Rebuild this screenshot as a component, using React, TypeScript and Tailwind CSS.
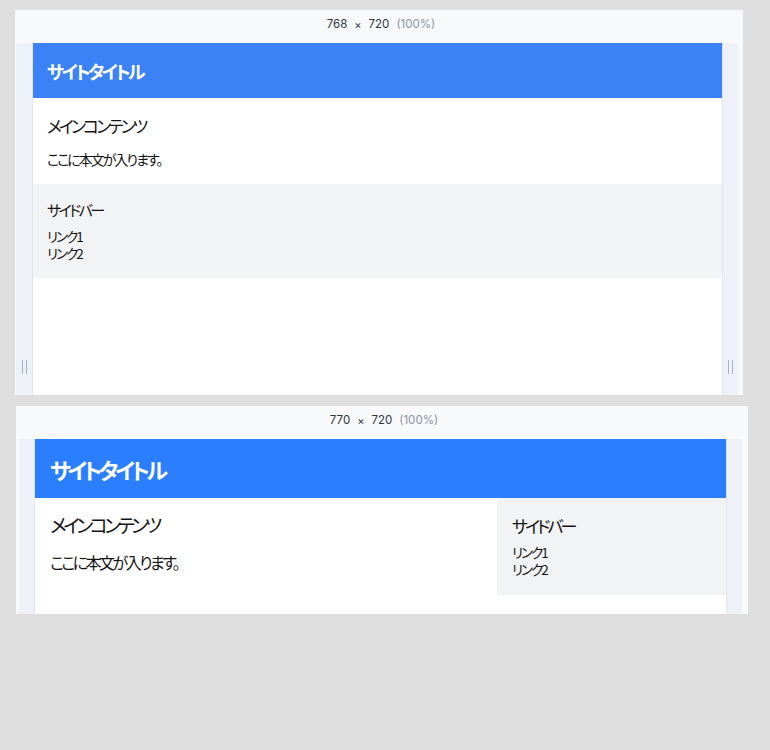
const jp = "font-['Noto_Sans_CJK_JP',sans-serif] [font-feature-settings:'palt']";

const SizeLabel = ({ w }: { w: number }) => (
  <div className="h-[33px] flex items-center justify-center text-[11.5px] font-['Inter',sans-serif] pb-[3px] pl-[4px]">
    <span className="text-[#2f3642]">{w}</span>
    <span className="ml-[7px] text-[#2f3642] text-[11px]">×</span>
    <span className="ml-[7px] text-[#2f3642]">720</span>
    <span className="ml-[7px] text-[#8a94a3]">(100%)</span>
  </div>
);

const Handle = () => (
  <div className="flex gap-[3px] h-[14px]">
    <div className="w-px h-full bg-[#a7b2c3]" />
    <div className="w-px h-full bg-[#a7b2c3]" />
  </div>
);

// narrow: sidebar stacks below main (768px)
const NarrowSite = () => (
  <div className={`flex-1 bg-white overflow-hidden text-[#141414] ${jp}`}>
    <header className="h-[55px] bg-[#3b82f6] px-[14px] flex items-center">
      <h1 className="text-[18px] leading-none tracking-[-2.5px] text-white font-semibold">サイトタイトル</h1>
    </header>
    <main className="h-[86px] px-[14px] pt-[16px]">
      <h2 className="text-[17px] leading-[23px] tracking-[-3px]">メインコンテンツ</h2>
      <p className="mt-[12px] text-[14px] leading-[20px] tracking-[-2px]">ここに本文が入ります。</p>
    </main>
    <aside className="h-[94px] bg-[#f2f3f5] px-[14px] pt-[16px]">
      <h3 className="text-[15px] leading-[20px] tracking-[-2.5px]">サイドバー</h3>
      <ul className="mt-[8px] text-[13.5px] leading-[17px] tracking-[-2px]">
        <li>リンク1</li>
        <li>リンク2</li>
      </ul>
    </aside>
  </div>
);

// wide: main + sidebar side by side (770px)
const WideSite = () => (
  <div className={`flex-1 bg-white overflow-hidden text-[#141414] ${jp}`}>
    <header className="h-[59px] bg-[#2b7fff] px-[15px] flex items-center">
      <h1 className="text-[22px] leading-none tracking-[-3.5px] text-white font-semibold">サイトタイトル</h1>
    </header>
    <div className="flex items-start">
      <main className="flex-1 px-[15px] pt-[16px]">
        <h2 className="text-[19px] leading-[22px] tracking-[-3.5px]">メインコンテンツ</h2>
        <p className="mt-[15px] text-[16px] leading-[22px] tracking-[-2.5px]">ここに本文が入ります。</p>
      </main>
      <aside className="w-[229px] h-[97px] bg-[#f2f3f5] px-[15px] pt-[16px]">
        <h3 className="text-[17px] leading-[24px] tracking-[-3px]">サイドバー</h3>
        <ul className="mt-[6px] text-[13.5px] leading-[17px] tracking-[-2px]">
          <li>リンク1</li>
          <li>リンク2</li>
        </ul>
      </aside>
    </div>
  </div>
);

export default function App() {
  return (
    <div className="min-h-[750px] bg-[#dedede] pt-[10px]">
      <section className="ml-[15px] w-[728px] h-[385px] bg-[#f8f9fb] flex flex-col">
        <SizeLabel w={768} />
        <div className="flex-1 flex pl-px pr-[5px]">
          <div className="w-[17px] bg-[#eef2f8] border-r border-[#dfe5ee] flex flex-col items-center justify-end pb-[21px] pl-[1px]">
            <Handle />
          </div>
          <NarrowSite />
          <div className="w-[16px] bg-[#eef2f8] border-l border-[#dfe5ee] flex flex-col items-center justify-end pb-[21px]">
            <Handle />
          </div>
        </div>
      </section>
      <section className="mt-[11px] ml-[16px] w-[732px] h-[208px] bg-[#f8f9fb] flex flex-col">
        <SizeLabel w={770} />
        <div className="flex-1 flex pl-[3px] pr-[6px] overflow-hidden">
          <div className="w-[16px] bg-[#eef2f8] border-r border-[#dfe5ee]" />
          <WideSite />
          <div className="w-[16px] bg-[#eef2f8] border-l border-[#dfe5ee]" />
        </div>
      </section>
    </div>
  );
}
